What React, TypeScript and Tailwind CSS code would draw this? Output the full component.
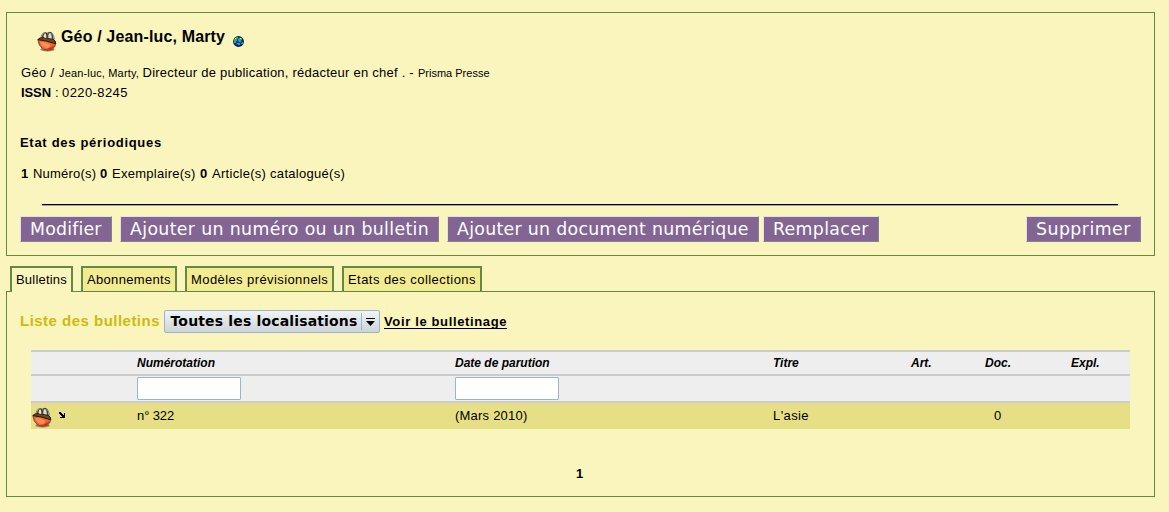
import type { ReactNode } from "react";

function Basket({ className }: { className: string }) {
  return (
    <svg className={className} width="20" height="21" viewBox="0 0 20 21">
      <ellipse cx="10.5" cy="18.4" rx="7.2" ry="2" fill="#77706a" opacity="0.85" />
      <path d="M0.8 8.5 Q9 9 18.7 12.5 Q18.3 16.5 15 18.4 Q10.5 20.2 6 18.2 Q1.5 15 0.8 8.5Z" fill="#ee6530" stroke="#6b4a3a" strokeWidth="0.9" />
      <path d="M2.8 11.2 Q8 10.4 13 13.4 Q13 16.6 10 17.2 Q5 16.4 2.8 11.2Z" fill="#ff8d4e" />
      <path d="M7 18.4 Q13 18 17.6 14 Q16.4 19.2 10.5 19.3Z" fill="#c8321a" />
      <path d="M3.4 7.5 L5.5 3.2 Q7 1 9.5 1.2 L14 1.2 Q16.6 3 17 9Z" fill="#a3a198" />
      <path d="M0.9 8.6 Q2.8 6.2 6 6.3 L16 8.2 Q19 9.5 18.8 12.8 Q10 9.6 0.9 8.6Z" fill="#6d4812" stroke="#191209" strokeWidth="0.9" />
      <path d="M6.8 6.6 L7.4 3 L9 3.2 L9.4 6.9Z" fill="#eee5bd" />
      <path d="M11.7 7 L12 2.7 L13.8 3 L14.6 7.4Z" fill="#d8dbe0" />
      <path d="M5.2 8 L6.3 3.2 Q7.8 .8 9.4 2 L10.3 7.4 M10.4 5.8 L11.1 2 Q13 .3 14.8 2.2 L16 8.6" fill="none" stroke="#2d2b28" strokeWidth="0.9" />
      <path d="M3.6 7 Q4.6 2.8 6.8 1.3 M14.2 1 Q16.8 3 17.6 8.4" fill="none" stroke="#777" strokeWidth="0.8" />
    </svg>
  );
}

function Globe() {
  return (
    <svg className="mt-[23px] ml-[8px] shrink-0" width="11" height="11" viewBox="0 0 11 11">
      <circle cx="5.5" cy="5.5" r="5.4" fill="#0d1348" />
      <circle cx="5.2" cy="5.2" r="4.4" fill="#1530e4" />
      <path d="M1 3h2V1h2v2H4v2H3v2H1zM6 2h3v2H8v2H6V5H5V3h1zM4 7h3v2H5V8H4zM9 6h1v2H8V7h1z" fill="#32b33f" />
      <path d="M2 2h1v1H2zM7 2h1v1H7z" fill="#c4f6ca" />
    </svg>
  );
}

function Button({ children, className }: { children: ReactNode; className: string }) {
  return (
    <button className={`h-[26px] shrink-0 border border-t-[#e5dfec] border-l-[#e5dfec] border-r-[#85818e] border-b-[#85818e] bg-[#836593] pl-[9px] text-left font-['DejaVu_Sans'] text-[17.33px] leading-[24px] whitespace-nowrap text-white ${className}`}>
      {children}
    </button>
  );
}

function Tab({ children, className }: { children: ReactNode; className: string }) {
  return (
    <div className={`box-border border-2 border-b-0 border-[#64893f] pl-[4px] text-[13px] leading-[24px] ${className}`}>
      {children}
    </div>
  );
}

const columns = "grid grid-cols-[106px_318px_318px_112px_74px_86px_85px]";

export default function App() {
  return (
    <main className="flex h-[512px] w-[1169px] flex-col overflow-hidden bg-[#faf4bd] pt-[12px] pl-[6px] font-['Liberation_Sans',sans-serif] text-[13px] leading-[20px] whitespace-nowrap text-black">
      <section className="flex h-[244px] w-[1149px] shrink-0 flex-col border border-[#64893f] pl-[13px]">
        <div className="flex h-[50px] shrink-0">
          <Basket className="mt-[18px] ml-[17px] shrink-0" />
          <h1 className="ml-[4px] w-[164px] pt-[14px] text-[16px] leading-[20px] font-bold tracking-[0.15px]">Géo / Jean-luc, Marty</h1>
          <Globe />
        </div>
        <div className="flex h-[20px] shrink-0 pl-px">
          <span className="w-[38px] tracking-[0.35px]">Géo /</span>
          <span className="w-[83.5px] text-[11px] tracking-[0.16px]">Jean-luc, Marty,</span>
          <span className="w-[275.5px] tracking-[0.24px]">Directeur de publication, rédacteur en chef . -</span>
          <span className="text-[11px]">Prisma Presse</span>
        </div>
        <div className="flex h-[50px] shrink-0 pl-px">
          <b className="w-[34px] tracking-[-0.1px]">ISSN</b>
          <span className="w-[7px]">:</span>
          <span className="tracking-[0.4px]">0220-8245</span>
        </div>
        <h2 className="h-[31px] shrink-0 text-[13px] leading-[20px] font-bold tracking-[0.7px]">Etat des périodiques</h2>
        <div className="flex h-[40px] shrink-0 pl-px">
          <b className="w-[12px]">1</b>
          <span className="w-[67px] tracking-[0.22px]">Numéro(s)</span>
          <b className="w-[12px]">0</b>
          <span className="w-[88px] tracking-[0.27px]">Exemplaire(s)</span>
          <b className="w-[12px]">0</b>
          <span className="tracking-[0.29px]">Article(s) catalogué(s)</span>
        </div>
        <div className="ml-[22px] h-[12px] w-[1076px] shrink-0">
          <div className="h-[2px] border-t border-b border-t-black border-b-[#aaa39d]" />
        </div>
        <div className="flex shrink-0">
          <Button className="w-[92px] tracking-[0.2px]">Modifier</Button>
          <Button className="ml-[8px] w-[319px] tracking-[0.36px]">Ajouter un numéro ou un bulletin</Button>
          <Button className="ml-[8px] w-[312px] tracking-[0.31px]">Ajouter un document numérique</Button>
          <Button className="ml-[4px] w-[116px] tracking-[0.35px]">Remplacer</Button>
          <Button className="ml-[147px] w-[115px] tracking-[0.46px]">Supprimer</Button>
        </div>
      </section>

      <nav className="z-10 mt-[10px] mb-[-1px] flex h-[26px] shrink-0 items-start gap-[8px] pl-[4px]">
        <Tab className="h-[26px] w-[63px] bg-[#faf4bd] tracking-[0.2px]">Bulletins</Tab>
        <Tab className="h-[25px] w-[96px] bg-[#f3eb91] tracking-[0.33px]">Abonnements</Tab>
        <Tab className="h-[25px] w-[149px] bg-[#f3eb91] tracking-[0.41px]">Modèles prévisionnels</Tab>
        <Tab className="h-[25px] w-[140px] bg-[#f3eb91] tracking-[0.45px]">Etats des collections</Tab>
      </nav>

      <section className="flex h-[206px] w-[1149px] shrink-0 flex-col border border-[#64893f]">
        <div className="flex h-[58px] shrink-0 items-start pt-[18px] pl-[13px]">
          <h2 className="w-[144px] text-[15px] leading-[22px] font-bold tracking-[0.48px] text-[#cdbb10]">Liste des bulletins</h2>
          <button className="flex h-[23px] w-[216px] overflow-hidden rounded-[2px] border border-[#9eb4c2] bg-linear-to-b from-[#f0f4f6] to-[#ccd5d9] text-left font-['DejaVu_Sans'] text-[14px] leading-[21px] font-bold tracking-[0.16px]">
            <span className="w-[196px] shrink-0 pl-[5.5px]">Toutes les localisations</span>
            <span className="my-[2px] flex w-[18px] justify-center border-l border-[#9eb4c2] pt-[5px]">
              <svg width="9" height="8" viewBox="0 0 9 8"><path d="M0 0h9v1H0zM0 3h9L4.5 8z" /></svg>
            </span>
          </button>
          <a className="mt-[4px] ml-[4px] h-[15px] w-[123px] border-b border-black leading-[16px] font-bold tracking-[0.64px]">Voir le bulletinage</a>
        </div>

        <div className="ml-[24px] w-[1099px] shrink-0">
          <div className={`${columns} h-[26px] border-y-2 border-[#ccc] bg-[#eee] text-[12px] leading-[22px] font-bold italic`}>
            <span /><span>Numérotation</span><span>Date de parution</span><span>Titre</span>
            <span className="pl-[26px]">Art.</span><span className="pl-[26px]">Doc.</span><span className="pl-[26px]">Expl.</span>
          </div>
          <div className={`${columns} h-[27px] border-b-2 border-[#ccc] bg-[#eee] pt-px`}>
            <span />
            <span><input aria-label="Numérotation" className="block h-[23px] w-[104px] rounded-[1px] border border-[#9eb4c2] bg-white" /></span>
            <span><input aria-label="Date de parution" className="block h-[23px] w-[104px] rounded-[1px] border border-[#9eb4c2] bg-white" /></span>
          </div>
          <div className={`${columns} h-[26px] bg-[#e7df85] leading-[25px] tracking-[0.3px]`}>
            <span className="flex">
              <Basket className="mt-[4px] ml-px shrink-0" />
              <svg className="mt-[9px] ml-[7px]" width="7" height="7" viewBox="0 0 7 7" shapeRendering="crispEdges">
                <path d="M0 0h2v1h1v1h1v1h1V1h1v5H1V5h2V4H2V3H1V2H0z" />
              </svg>
            </span>
            <span className="tracking-[-0.1px]">n° 322</span><span className="tracking-[0.22px]">(Mars 2010)</span><span className="tracking-[0.4px]">L'asie</span><span /><span className="pl-[35px]">0</span>
          </div>
        </div>
        <div className="pt-[35px] pr-[2px] text-center font-bold">1</div>
      </section>
    </main>
  );
}
